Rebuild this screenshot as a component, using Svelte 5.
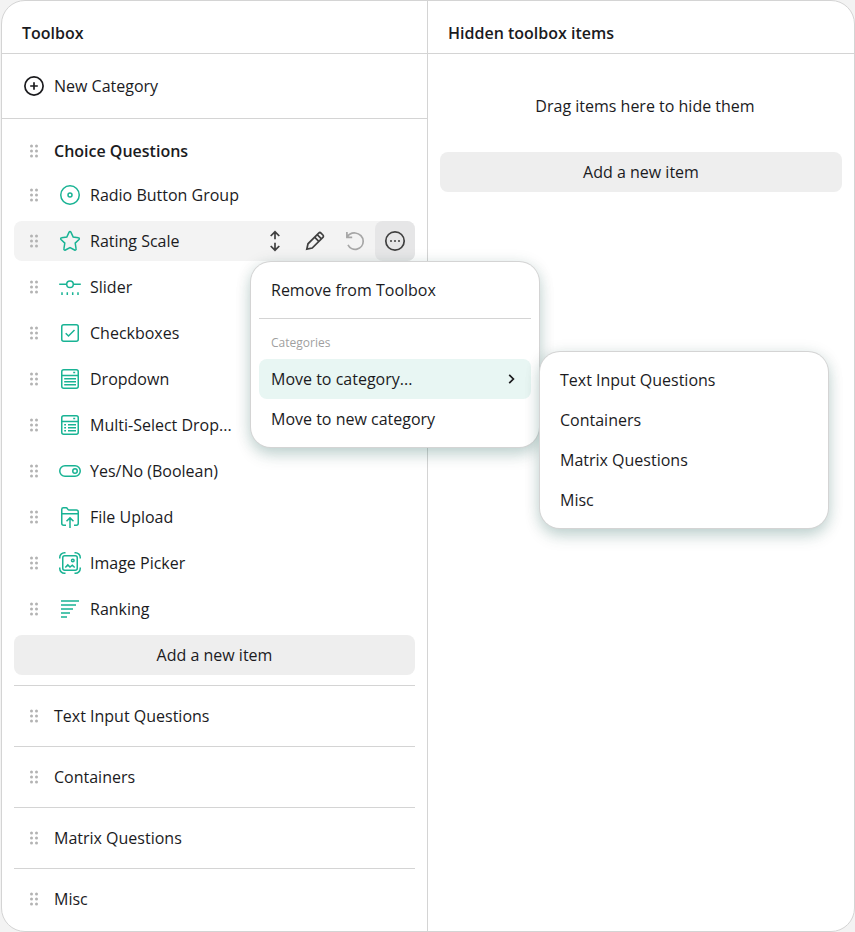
<script>
  const items = [
    { title: 'Radio Button Group', icon: 'radio' },
    { title: 'Rating Scale', icon: 'star', active: true },
    { title: 'Slider', icon: 'slider' },
    { title: 'Checkboxes', icon: 'check' },
    { title: 'Dropdown', icon: 'dropdown' },
    { title: 'Multi-Select Drop...', icon: 'multi' },
    { title: 'Yes/No (Boolean)', icon: 'toggle' },
    { title: 'File Upload', icon: 'file' },
    { title: 'Image Picker', icon: 'image' },
    { title: 'Ranking', icon: 'ranking' }
  ];
  const categories = ['Text Input Questions', 'Containers', 'Matrix Questions', 'Misc'];
</script>

{#snippet grip()}
  <svg class="grip" viewBox="0 0 24 24" aria-hidden="true">
    {#each [7, 12, 17] as y}
      <circle cx="9.5" cy={y} r="1.5" />
      <circle cx="14.5" cy={y} r="1.5" />
    {/each}
  </svg>
{/snippet}

{#snippet glyph(name)}
  <svg class="icon" viewBox="0 0 24 24" aria-hidden="true">
    {#if name === 'radio'}
      <circle cx="12" cy="12" r="9.25" />
      <circle cx="12" cy="12" r="2" />
    {:else if name === 'star'}
      <path d="M11.1 3.1C11.5 2.3 12.5 2.3 12.9 3.1L15.2 8.1L20.4 8.8C21.3 8.9 21.6 9.9 21 10.5L17.2 14.1L18.1 19.9C18.3 20.8 17.4 21.4 16.6 21L12 18.5L7.4 21C6.6 21.4 5.7 20.8 5.9 19.9L6.8 14.1L3 10.5C2.4 9.9 2.7 8.9 3.6 8.8L8.8 8.1Z" />
    {:else if name === 'slider'}
      <path d="M1.2 9.3H8.7M15.3 9.3H22.8M4 17.2V20M9.3 17.2V20M14.7 17.2V20M20 17.2V20" />
      <circle cx="12" cy="9.3" r="3.3" />
    {:else if name === 'check'}
      <rect x="3.75" y="3.75" width="16.5" height="16.5" rx="2" />
      <path d="M7.7 12.3L10.5 15L16.5 9" />
    {:else if name === 'dropdown'}
      <rect x="3.75" y="2.75" width="16.5" height="18.5" rx="2" />
      <path d="M4 8.5H20M6.2 11.7H18M6.2 14.7H18M6.2 17.7H18M15.2 5.6H17.2" />
    {:else if name === 'multi'}
      <rect x="3.75" y="2.75" width="16.5" height="18.5" rx="2" />
      <path d="M4 8.5H20M6.2 11.7H8M10 11.7H18M6.2 14.7H8M10 14.7H18M6.2 17.7H8M10 17.7H18M15.2 5.6H17.2" />
    {:else if name === 'toggle'}
      <rect x="1.75" y="6.75" width="20.5" height="10.5" rx="5.25" />
      <circle cx="17" cy="12" r="2.25" />
    {:else if name === 'file'}
      <path d="M8 20.2H5.7A2 2 0 0 1 3.75 18.2V4.4A1.6 1.6 0 0 1 5.35 2.8H8.2C9.6 2.8 9.4 4.9 10.8 4.9H18.3A2 2 0 0 1 20.25 6.9V18.2A2 2 0 0 1 18.3 20.2H16M4 8.7H20M12 23V13M8.5 16.3L12 12.9L15.5 16.3" />
    {:else if name === 'image'}
      <rect x="4.75" y="4.75" width="14.5" height="14.5" rx="2" />
      <circle cx="14.8" cy="9.5" r="1.3" />
      <path d="M7.3 16.5L9.8 13.9L12 16L14.3 14.2L16.7 16.5M1.75 7.5V6.5A4.75 4.75 0 0 1 6.5 1.75H7.5M16.5 1.75H17.5A4.75 4.75 0 0 1 22.25 6.5V7.5M22.25 16.5V17.5A4.75 4.75 0 0 1 17.5 22.25H16.5M7.5 22.25H6.5A4.75 4.75 0 0 1 1.75 17.5V16.5" />
    {:else if name === 'ranking'}
      <path d="M3 4H21M3 8H18M3 12H15M3 16H12M3 20H9" />
    {/if}
  </svg>
{/snippet}

<main class="card">
  <section class="column">
    <h2>Toolbox</h2>
    <div class="new-category">
      <button type="button">
        <svg viewBox="0 0 20 20" aria-hidden="true"><circle cx="10" cy="10" r="9.1" /><path d="M10 6.2V13.8M6.2 10H13.8" /></svg>
        New Category
      </button>
    </div>
    <div class="list">
      <div class="row title">{@render grip()}<h3>Choice Questions</h3></div>
      <ul class="items">
        {#each items as item}
          <li class="row item" class:active={item.active}>
            {@render grip()}
            {@render glyph(item.icon)}
            <span class="label">{item.title}</span>
            {#if item.active}
              <div class="actions">
                <button type="button" aria-label="Move">
                  <svg viewBox="0 0 24 24"><path d="M12 10.2V3M7.7 7L12 2.8L16.3 7M12 13.8V21M7.7 17L12 21.2L16.3 17" /></svg>
                </button>
                <button type="button" aria-label="Edit">
                  <svg viewBox="0 0 24 24"><path d="M3.8 20.2L5 14.8L15.7 4.1C16.4 3.4 17.3 3.4 18 4.1L19.9 6C20.6 6.7 20.6 7.6 19.9 8.3L9.2 19ZM11.6 8.2L15.8 12.4M14.2 5.6L18.4 9.8" /></svg>
                </button>
                <button type="button" aria-label="Reset" class="muted">
                  <svg viewBox="0 0 24 24"><path d="M3.9 3V8.3H9.2M4.2 8.1C5.8 5.3 8.9 3.7 12.3 4C16.7 4.4 20.2 8 20.2 12.3A8 8 0 0 1 5 15.8" /></svg>
                </button>
                <div class="anchor">
                  <button type="button" aria-label="More" aria-expanded="true" class="pressed">
                    <svg viewBox="0 0 24 24"><circle cx="12" cy="12" r="9.2" /><path d="M7 12H9M11 12H13M15 12H17" /></svg>
                  </button>
                  <div class="menu main-menu" role="menu">
                    <button type="button" role="menuitem">Remove from Toolbox</button>
                    <div class="group">
                      <div class="caption">Categories</div>
                      <div class="anchor">
                        <button type="button" role="menuitem" class="selected" aria-haspopup="true">
                          Move to category...
                          <svg viewBox="0 0 16 16" aria-hidden="true"><path d="M6.2 3.8L10.4 8L6.2 12.2" /></svg>
                        </button>
                        <div class="menu sub-menu" role="menu">
                          {#each categories as category}
                            <button type="button" role="menuitem">{category}</button>
                          {/each}
                        </div>
                      </div>
                      <button type="button" role="menuitem">Move to new category</button>
                    </div>
                  </div>
                </div>
              </div>
            {/if}
          </li>
        {/each}
      </ul>
      <button type="button" class="add">Add a new item</button>
      {#each categories as category}
        <div class="category"><div class="row">{@render grip()}<span>{category}</span></div></div>
      {/each}
    </div>
  </section>
  <section class="column">
    <h2>Hidden toolbox items</h2>
    <div class="hidden-items">
      <p>Drag items here to hide them</p>
      <button type="button" class="add">Add a new item</button>
    </div>
  </section>
</main>

<style>
  :global(body) {
    margin: 0;
    background: #f3f3f3;
  }
  .card,
  .card * {
    box-sizing: border-box;
  }
  .card {
    display: flex;
    min-height: 100vh;
    margin-left: 1px;
    border: 1px solid #d4d4d4;
    border-radius: 24px;
    background: #fff;
    color: #1b1b1e;
    font: 16px/24px 'Open Sans', sans-serif;
  }
  .column {
    flex: none;
    width: 50%;
  }
  .column:first-child {
    border-right: 1px solid #d4d4d4;
  }
  h2,
  h3,
  p,
  ul {
    margin: 0;
    padding: 0;
    font-size: 16px;
  }
  h2,
  h3 {
    font-weight: 600;
  }
  h2 {
    padding: 20px 20px 8px;
    border-bottom: 1px solid #d4d4d4;
  }
  button {
    border: 0;
    background: none;
    color: inherit;
    font: inherit;
    cursor: pointer;
  }
  svg {
    flex: none;
    fill: none;
    stroke: currentColor;
    stroke-width: 1.5;
  }
  .new-category {
    padding: 12px;
    border-bottom: 1px solid #d4d4d4;
  }
  .new-category button {
    display: flex;
    align-items: center;
    gap: 10px;
    height: 40px;
    padding: 0 10px;
  }
  .new-category svg {
    width: 20px;
    height: 20px;
    stroke-width: 1.7;
  }
  .list {
    padding: 12px 12px 0;
  }
  .row {
    display: flex;
    align-items: center;
    gap: 8px;
    height: 40px;
    padding-left: 8px;
    border-radius: 8px;
  }
  .title {
    margin-bottom: 4px;
  }
  .grip {
    width: 24px;
    height: 24px;
    fill: #b3b3b3;
    stroke: none;
  }
  .items {
    display: flex;
    flex-direction: column;
    gap: 6px;
    margin-bottom: 6px;
    list-style: none;
  }
  .active {
    background: #f3f3f3;
  }
  .icon {
    width: 24px;
    height: 24px;
    margin-left: 4px;
    color: #19b394;
  }
  .label {
    white-space: nowrap;
  }
  .actions {
    display: flex;
    margin-left: auto;
  }
  .actions > button,
  .pressed {
    display: flex;
    align-items: center;
    justify-content: center;
    width: 40px;
    height: 40px;
    padding: 0;
    border-radius: 8px;
    color: #404040;
  }
  .actions > button svg,
  .pressed svg {
    width: 24px;
    height: 24px;
    stroke-width: 1.7;
  }
  .actions > .muted {
    color: #a6a6a6;
  }
  .pressed {
    background: #e6e6e7;
  }
  .anchor {
    position: relative;
  }
  .menu {
    position: absolute;
    z-index: 1;
    width: 288px;
    padding: 8px;
    border-radius: 20px;
    background: #fff;
    box-shadow:
      0 0 0 1px #d4d4d4,
      0 8px 16px rgba(0, 76, 68, 0.18),
      0 2px 16px rgba(0, 76, 68, 0.15);
  }
  .main-menu {
    top: 41px;
    right: -124px;
  }
  .sub-menu {
    top: -7px;
    left: 281px;
  }
  .menu button {
    display: flex;
    align-items: center;
    justify-content: space-between;
    width: 100%;
    height: 40px;
    padding: 0 12px;
    border-radius: 8px;
    text-align: left;
  }
  .menu button svg {
    width: 16px;
    height: 16px;
    stroke-width: 1.7;
  }
  .menu .selected {
    background: #e8f6f3;
  }
  .group {
    margin-top: 8px;
    border-top: 1px solid #d4d4d4;
  }
  .caption {
    padding: 16px 12px 8px;
    color: #9f9f9f;
    font-size: 12px;
    font-weight: 500;
    line-height: 16px;
  }
  .add {
    display: block;
    width: 100%;
    height: 40px;
    border-radius: 8px;
    background: #eee;
  }
  .category {
    padding: 10px 0;
    border-top: 1px solid #d4d4d4;
  }
  .add + .category {
    margin-top: 10px;
  }
  .hidden-items {
    padding: 40px 12px;
  }
  .hidden-items p {
    margin-bottom: 34px;
    padding-left: 8px;
    text-align: center;
  }
</style>
